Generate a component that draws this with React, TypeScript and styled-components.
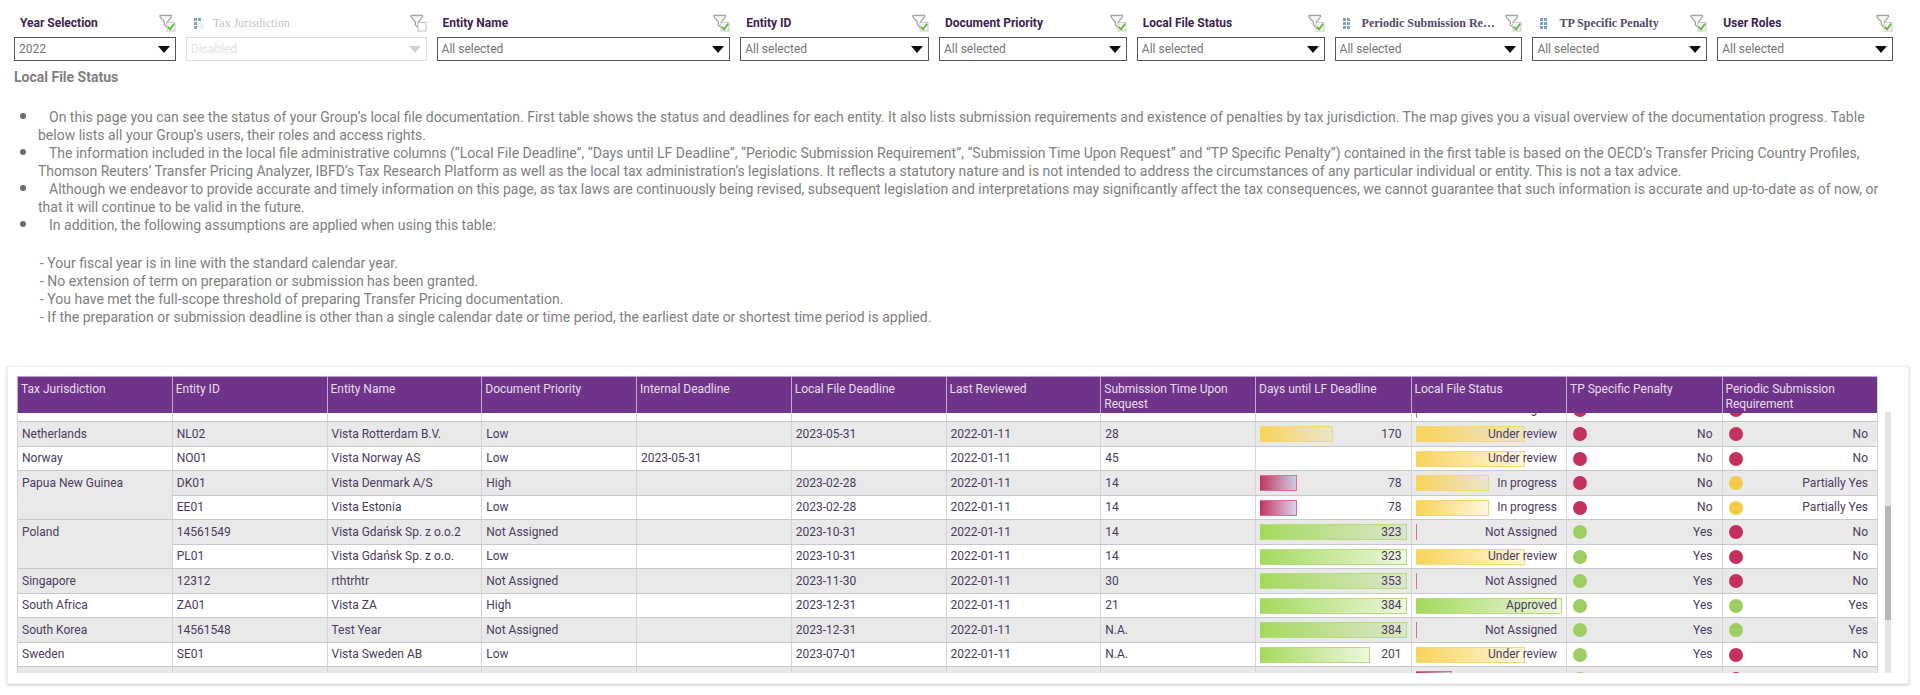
import React, { useLayoutEffect, useRef } from "react";
import styled, { createGlobalStyle, css } from "styled-components";

const GlobalStyle = createGlobalStyle`
  * { box-sizing: border-box; }
  body {
    margin: 0;
    background: #ffffff;
    font-family: Roboto, "Liberation Sans", sans-serif;
    color: #4b3a63;
  }
`;

const Page = styled.main`
  display: flex;
  flex-direction: column;
`;

/* ---------- Filters ---------- */

const FilterBar = styled.div`
  display: grid;
  grid-template-columns: 162fr 241fr 294fr 189fr 188fr 188fr 188fr 175fr 176fr;
  column-gap: 10px;
  padding: 13px 27px 0 14px;
`;

const FilterField = styled.div`
  display: flex;
  flex-direction: column;
  gap: 4px;
  min-width: 0;
`;

const FilterHead = styled.div`
  display: flex;
  align-items: center;
  gap: 6px;
  height: 20px;
  padding-left: 6px;
`;

const FilterLabel = styled.label<{ $serif?: boolean; $muted?: boolean }>`
  flex: 1;
  min-width: 0;
  overflow: hidden;
  text-overflow: ellipsis;
  white-space: nowrap;
  font-size: 12px;
  line-height: 20px;
  font-weight: ${(p) => (p.$muted ? 400 : 700)};
  color: ${(p) => (p.$muted ? "#c4c4c4" : p.$serif ? "#54496a" : "#3b2352")};
  ${(p) =>
    p.$serif &&
    css`
      padding-left: 3px;
      font-family: "Liberation Serif", serif;
    `}
`;

const SelectWrap = styled.div`
  display: grid;
  align-items: center;
  > * {
    grid-area: 1 / 1;
  }
  > svg {
    justify-self: end;
    margin-right: 6px;
    pointer-events: none;
  }
`;

const Select = styled.select`
  appearance: none;
  width: 100%;
  height: 24px;
  margin: 0;
  padding: 1px 24px 0 4px;
  border: 1px solid #55505c;
  border-radius: 0;
  background: #ffffff;
  color: #757575;
  font-family: inherit;
  font-size: 12px;
  line-height: 21px;
  &:disabled {
    border-color: #dedede;
    color: #e2e2e2;
    opacity: 1;
  }
`;

const FunnelIcon = ({ checked = true }: { checked?: boolean }) => (
  <svg width="17" height="18" viewBox="0 0 17 18" fill="none" aria-hidden="true">
    <path d="M1 1.500h11.500v1.300L8.300 8v5.600L5.400 11V8L1 2.800z" fill="#fff" stroke="#a5a5a5" strokeWidth="1.300" />
    {checked ? (
      <>
        <rect x="8" y="8.500" width="8" height="8.500" fill="#f4f4f4" stroke="#c9c9c9" />
        <path d="M8.800 12.800l2.300 2.500 4-5.600" stroke="#5fbb32" strokeWidth="1.800" />
      </>
    ) : (
      <rect x="8" y="8.500" width="8" height="8.500" fill="#fff" stroke="#bdbdbd" />
    )}
  </svg>
);

const LevelsIcon = ({ muted }: { muted?: boolean }) => (
  <svg width="12" height="14" viewBox="0 0 12 14" aria-hidden="true">
    <g fill="#7fa3c4">
      <rect x="2" y="2" width="3" height="3" />
      <rect x="2" y="6" width="3" height="3" />
      <rect x="2" y="10" width="3" height="3" />
      <rect x="6" y="2" width="3" height="3" />
      {!muted && <rect x="6" y="6" width="3" height="3" />}
      {!muted && <rect x="6" y="10" width="3" height="3" />}
    </g>
    {muted && <circle cx="8.500" cy="10" r="3.500" fill="#eef0f2" />}
  </svg>
);

const Caret = ({ muted }: { muted?: boolean }) => (
  <svg width="12" height="7" viewBox="0 0 12 7" aria-hidden="true">
    <path d="M0 0h12L6 7z" fill={muted ? "#d2d2d2" : "#120d18"} />
  </svg>
);

interface FilterDef {
  id: string;
  label: string;
  value: string;
  serif?: boolean;
  disabled?: boolean;
}

const filters: FilterDef[] = [
  { id: "year", label: "Year Selection", value: "2022" },
  { id: "jurisdiction", label: "Tax Jurisdiction", value: "Disabled", serif: true, disabled: true },
  { id: "entity-name", label: "Entity Name", value: "All selected" },
  { id: "entity-id", label: "Entity ID", value: "All selected" },
  { id: "priority", label: "Document Priority", value: "All selected" },
  { id: "status", label: "Local File Status", value: "All selected" },
  { id: "periodic", label: "Periodic Submission Requirement", value: "All selected", serif: true },
  { id: "penalty", label: "TP Specific Penalty", value: "All selected", serif: true },
  { id: "roles", label: "User Roles", value: "All selected" },
];

/* ---------- Introduction ---------- */

const Intro = styled.section`
  padding: 6px 24px 0 14px;
  color: #808080;
  font-size: 14px;
  line-height: 18px;
`;

const Title = styled.h1`
  margin: 0 0 21px;
  font-size: 14px;
  line-height: 20px;
  font-weight: 700;
`;

const Notes = styled.ul`
  margin: 0;
  padding: 0;
  list-style: none;
`;

const Note = styled.li`
  display: flex;
  &::before {
    content: "";
    flex: none;
    width: 6px;
    height: 6px;
    margin: 5px 12px 0 6px;
    border-radius: 50%;
    background: #6c6c6c;
  }
`;

const NoteText = styled.p`
  flex: 1;
  margin: 0;
  text-indent: 11px;
`;

const Assumptions = styled.ul`
  margin: 20px 0 0;
  padding: 0 0 0 26px;
  list-style: none;
`;

/* ---------- Table ---------- */

const Card = styled.section`
  display: flex;
  gap: 7px;
  margin: 40px 11px 10px 7px;
  padding: 9px 17px 10px 9px;
  background: #ffffff;
  border: 1px solid #efefef;
  box-shadow: 0 1px 3px rgba(0, 0, 0, 0.22);
`;

const Scroller = styled.div`
  flex: 1;
  height: 297px;
  overflow-y: auto;
  scrollbar-width: none;
`;

const Track = styled.div`
  width: 6px;
  margin-top: 36px;
  padding-top: 94px;
  background: #e3e4e6;
`;

const Thumb = styled.div`
  height: 114px;
  background: #b7b8bc;
`;

const Table = styled.table`
  width: 100%;
  table-layout: fixed;
  border-collapse: separate;
  border-spacing: 0;
  border-right: 1px solid #d3d5dc;
  font-size: 12px;
  line-height: 15px;
`;

const TextColumn = styled.col`
  width: 8.32%;
`;

const HeadCell = styled.th`
  position: sticky;
  top: 0;
  z-index: 1;
  height: 37px;
  padding: 5px 3px 1px;
  border-top: 1px solid #b9a6c6;
  border-left: 1px solid #c3abd0;
  background: #6f348a;
  color: #e9dff0;
  font-weight: 400;
  text-align: left;
  vertical-align: top;
`;

const Row = styled.tr`
  height: 24px;
  background: #ffffff;
  &:nth-child(even) {
    height: 25px;
    background: #e9e9e9;
  }
`;

const Cell = styled.td<{ $group?: boolean }>`
  padding: 0 4px;
  border-left: 1px solid #d3d5dc;
  border-bottom: 1px solid #c5c8d2;
  vertical-align: ${(p) => (p.$group ? "top" : "middle")};
  white-space: nowrap;
  ${(p) =>
    p.$group &&
    css`
      padding-top: 5px;
      background: #e9e9e9;
    `}
`;

type Tone = "red" | "yellow" | "green";

const barTones: Record<Tone, { from: string; to: string; edge: string }> = {
  red: { from: "#c6335f", to: "rgba(196, 180, 220, 0.6)", edge: "#dc6d90" },
  yellow: { from: "#f8d458", to: "rgba(248, 212, 88, 0.2)", edge: "#f7d773" },
  green: { from: "#a5d95c", to: "rgba(165, 217, 92, 0.2)", edge: "#b4de7c" },
};

const dotTones: Record<Tone, string> = { red: "#c5315d", yellow: "#f4ca48", green: "#9ccf60" };

const Meter = styled.div`
  display: grid;
  align-items: center;
  > * {
    grid-area: 1 / 1;
  }
`;

const MeterFill = styled.div<{ $tone: Tone }>`
  height: 16px;
  min-width: 1px;
  border: 1px solid ${(p) => barTones[p.$tone].edge};
  border-width: 1px 1px 1px 0;
  background: linear-gradient(to right, ${(p) => barTones[p.$tone].from}, ${(p) => barTones[p.$tone].to});
`;

const MeterValue = styled.span`
  justify-self: end;
  padding-right: 5px;
`;

const Flag = styled.div`
  display: flex;
  align-items: center;
  justify-content: space-between;
  padding: 0 5px 0 2px;
`;

const Dot = styled.span<{ $tone: Tone }>`
  width: 14px;
  height: 14px;
  border-radius: 50%;
  background: ${(p) => dotTones[p.$tone]};
`;

const columns = [
  "Tax Jurisdiction",
  "Entity ID",
  "Entity Name",
  "Document Priority",
  "Internal Deadline",
  "Local File Deadline",
  "Last Reviewed",
  "Submission Time Upon Request",
  "Days until LF Deadline",
  "Local File Status",
  "TP Specific Penalty",
  "Periodic Submission Requirement",
];

const TEXT_COLUMNS = 8;

interface Entry {
  key: string;
  group?: string;
  span?: number;
  id?: string;
  name?: string;
  priority?: string;
  internal?: string;
  deadline?: string;
  reviewed?: string;
  submission?: string;
  days?: { value: number; fill: number; tone: Tone };
  status?: string;
  statusBar: { fill: number; tone: Tone };
  penalty?: string;
  penaltyTone: Tone;
  periodic?: string;
  periodicTone: Tone;
}

const statusBars: Record<string, { fill: number; tone: Tone }> = {
  "Not Assigned": { fill: 0, tone: "red" },
  "In progress": { fill: 50, tone: "yellow" },
  "Under review": { fill: 75, tone: "yellow" },
  Approved: { fill: 100, tone: "green" },
};

const answerTones: Record<string, Tone> = { Yes: "green", No: "red", "Partially Yes": "yellow" };

const entry = (
  group: string | undefined,
  span: number | undefined,
  id: string,
  name: string,
  priority: string,
  internal: string,
  deadline: string,
  submission: string,
  days: Entry["days"],
  status: string,
  penalty: string,
  periodic: string
): Entry => ({
  key: id,
  group,
  span,
  id,
  name,
  priority,
  internal,
  deadline,
  reviewed: "2022-01-11",
  submission,
  days,
  status,
  statusBar: statusBars[status],
  penalty,
  penaltyTone: answerTones[penalty],
  periodic,
  periodicTone: answerTones[periodic],
});

const green = (value: number, fill = 100): Entry["days"] => ({ value, fill, tone: "green" });
const overdue: Entry["days"] = { value: 78, fill: 25, tone: "red" };

const entries: Entry[] = [
  {
    key: "previous",
    group: "",
    submission: "30",
    status: "Not Assigned",
    statusBar: statusBars["Not Assigned"],
    penalty: "No",
    penaltyTone: "red",
    periodic: "No",
    periodicTone: "red",
  },
  entry("Netherlands", 1, "NL02", "Vista Rotterdam B.V.", "Low", "", "2023-05-31", "28", { value: 170, fill: 50, tone: "yellow" }, "Under review", "No", "No"),
  entry("Norway", 1, "NO01", "Vista Norway AS", "Low", "2023-05-31", "", "45", undefined, "Under review", "No", "No"),
  entry("Papua New Guinea", 2, "DK01", "Vista Denmark A/S", "High", "", "2023-02-28", "14", overdue, "In progress", "No", "Partially Yes"),
  entry(undefined, undefined, "EE01", "Vista Estonia", "Low", "", "2023-02-28", "14", overdue, "In progress", "No", "Partially Yes"),
  entry("Poland", 2, "14561549", "Vista Gdańsk Sp. z o.o.2", "Not Assigned", "", "2023-10-31", "14", green(323), "Not Assigned", "Yes", "No"),
  entry(undefined, undefined, "PL01", "Vista Gdańsk Sp. z o.o.", "Low", "", "2023-10-31", "14", green(323), "Under review", "Yes", "No"),
  entry("Singapore", 1, "12312", "rthtrhtr", "Not Assigned", "", "2023-11-30", "30", green(353), "Not Assigned", "Yes", "No"),
  entry("South Africa", 1, "ZA01", "Vista ZA", "High", "", "2023-12-31", "21", green(384), "Approved", "Yes", "Yes"),
  entry("South Korea", 1, "14561548", "Test Year", "Not Assigned", "", "2023-12-31", "N.A.", green(384), "Not Assigned", "Yes", "Yes"),
  entry("Sweden", 1, "SE01", "Vista Sweden AB", "Low", "", "2023-07-01", "N.A.", green(201, 75), "Under review", "Yes", "No"),
  {
    key: "next",
    group: "",
    statusBar: { fill: 25, tone: "red" },
    penaltyTone: "green",
    periodicTone: "red",
  },
];

const MeterCell = ({ value, fill, tone }: { value?: string | number; fill: number; tone: Tone }) => (
  <Meter>
    <MeterFill $tone={tone} style={{ width: `${fill}%` }} />
    <MeterValue>{value}</MeterValue>
  </Meter>
);

const FlagCell = ({ value, tone }: { value?: string; tone: Tone }) => (
  <Flag>
    <Dot $tone={tone} />
    {value}
  </Flag>
);

const StatusTable = () => {
  const scroller = useRef<HTMLDivElement>(null);
  useLayoutEffect(() => {
    if (scroller.current) scroller.current.scrollTop = 15;
  }, []);

  return (
    <Card>
      <Scroller ref={scroller}>
        <Table>
          <colgroup>
            {columns.map((c, i) => (i < TEXT_COLUMNS ? <TextColumn key={c} /> : <col key={c} />))}
          </colgroup>
          <thead>
            <tr>
              {columns.map((c) => (
                <HeadCell key={c} scope="col">
                  {c}
                </HeadCell>
              ))}
            </tr>
          </thead>
          <tbody>
            {entries.map((e) => (
              <Row key={e.key}>
                {e.group !== undefined && (
                  <Cell rowSpan={e.span} $group={e.span === 2}>
                    {e.group}
                  </Cell>
                )}
                <Cell>{e.id}</Cell>
                <Cell>{e.name}</Cell>
                <Cell>{e.priority}</Cell>
                <Cell>{e.internal}</Cell>
                <Cell>{e.deadline}</Cell>
                <Cell>{e.reviewed}</Cell>
                <Cell>{e.submission}</Cell>
                <Cell>{e.days && <MeterCell {...e.days} />}</Cell>
                <Cell>
                  <MeterCell value={e.status} {...e.statusBar} />
                </Cell>
                <Cell>
                  <FlagCell value={e.penalty} tone={e.penaltyTone} />
                </Cell>
                <Cell>
                  <FlagCell value={e.periodic} tone={e.periodicTone} />
                </Cell>
              </Row>
            ))}
          </tbody>
        </Table>
      </Scroller>
      <Track>
        <Thumb />
      </Track>
    </Card>
  );
};

export default function App() {
  return (
    <Page>
      <GlobalStyle />
      <FilterBar>
        {filters.map((f) => (
          <FilterField key={f.id}>
            <FilterHead>
              {f.serif && <LevelsIcon muted={f.disabled} />}
              <FilterLabel htmlFor={f.id} $serif={f.serif} $muted={f.disabled}>
                {f.label}
              </FilterLabel>
              <FunnelIcon checked={!f.disabled} />
            </FilterHead>
            <SelectWrap>
              <Select id={f.id} disabled={f.disabled}>
                <option>{f.value}</option>
              </Select>
              <Caret muted={f.disabled} />
            </SelectWrap>
          </FilterField>
        ))}
      </FilterBar>
      <Intro>
        <Title>Local File Status</Title>
        <Notes>
          <Note>
            <NoteText>
              On this page you can see the status of your Group’s local file documentation. First table shows the status
              and deadlines for each entity. It also lists submission requirements and existence of penalties by tax
              jurisdiction. The map gives you a visual overview of the documentation progress. Table below lists all
              your Group's users, their roles and access rights.
            </NoteText>
          </Note>
          <Note>
            <NoteText>
              The information included in the local file administrative columns (“Local File Deadline”, “Days until LF
              Deadline”, “Periodic Submission Requirement”, “Submission Time Upon Request” and “TP Specific Penalty”)
              contained in the first table is based on the OECD’s Transfer Pricing Country Profiles, Thomson Reuters’
              Transfer Pricing Analyzer, IBFD’s Tax Research Platform as well as the local tax administration’s
              legislations. It reflects a statutory nature and is not intended to address the circumstances of any
              particular individual or entity. This is not a tax advice.
            </NoteText>
          </Note>
          <Note>
            <NoteText>
              Although we endeavor to provide accurate and timely information on this page, as tax laws are continuously
              being revised, subsequent legislation and interpretations may significantly affect the tax consequences,
              we cannot guarantee that such information is accurate and up-to-date as of now, or that it will continue
              to be valid in the future.
            </NoteText>
          </Note>
          <Note>
            <NoteText>In addition, the following assumptions are applied when using this table:</NoteText>
          </Note>
        </Notes>
        <Assumptions>
          <li>- Your fiscal year is in line with the standard calendar year.</li>
          <li>- No extension of term on preparation or submission has been granted.</li>
          <li>- You have met the full-scope threshold of preparing Transfer Pricing documentation.</li>
          <li>
            - If the preparation or submission deadline is other than a single calendar date or time period, the
            earliest date or shortest time period is applied.
          </li>
        </Assumptions>
      </Intro>
      <StatusTable />
    </Page>
  );
}
